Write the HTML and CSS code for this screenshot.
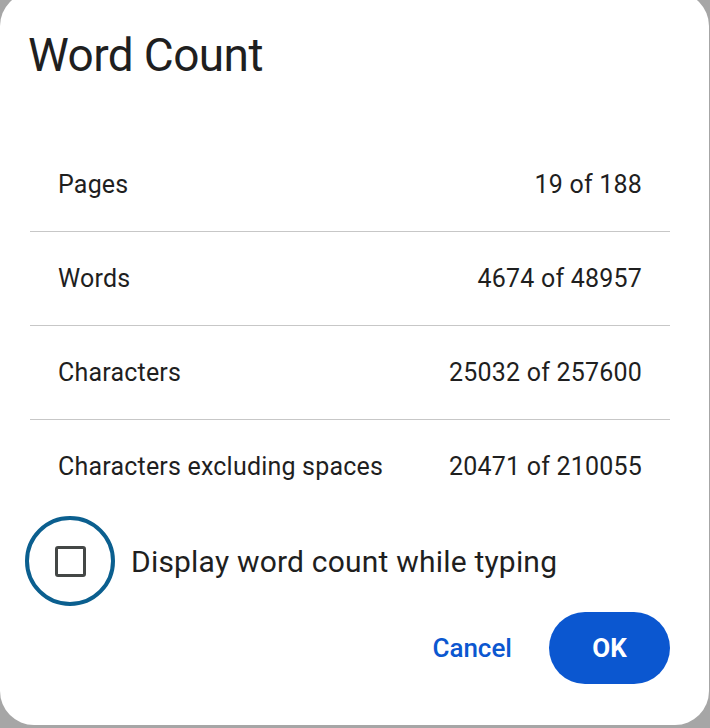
FILE: index.html
```html
<!DOCTYPE html>
<html lang="en">
<head>
<meta charset="UTF-8">
<meta name="viewport" content="width=device-width, initial-scale=1.0">
<title>Word Count</title>
<link rel="stylesheet" href="styles.css">
</head>
<body>

<div class="dialog">
    <h1 class="title">Word Count</h1>

    <div class="stats">
        <div class="stat-row">
            <span>Pages</span>
            <span>19 of 188</span>
        </div>
        <div class="stat-row">
            <span>Words</span>
            <span>4674 of 48957</span>
        </div>
        <div class="stat-row">
            <span>Characters</span>
            <span>25032 of 257600</span>
        </div>
        <div class="stat-row">
            <span>Characters excluding spaces</span>
            <span>20471 of 210055</span>
        </div>
    </div>

    <label class="check-row">
        <span class="focus-ring"><span class="box"></span></span>
        <span class="check-label">Display word count while typing</span>
    </label>

    <div class="actions">
        <button class="btn-text">Cancel</button>
        <button class="btn-ok">OK</button>
    </div>
</div>

</body>
</html>
```

FILE: styles.css
```css
body {
    margin: 0;
    background-color: #a6a6a6;
    font-family: Roboto, "Liberation Sans", sans-serif;
    color: #1f1f1f;
    overflow: hidden;
}
.dialog {
    box-sizing: border-box;
    width: 709px;
    height: 733px;
    margin-top: -8px;
    background-color: #fff;
    border-radius: 34px;
    padding-top: 8px;
}
.title {
    margin: 0;
    padding: 28px 0 0 28px;
    font-size: 46px;
    font-weight: 400;
    line-height: 54px;
    letter-spacing: -0.6px;
}
.stats {
    margin: 56px 39px 0 30px;
}
.stat-row {
    display: flex;
    justify-content: space-between;
    align-items: center;
    height: 93px;
    padding: 0 28px;
    font-size: 25px;
    letter-spacing: 0.2px;
    border-bottom: 1px solid #c7c7c7;
}
.stat-row:last-child {
    border-bottom: none;
}
.check-row {
    display: flex;
    align-items: center;
    margin-top: 3px;
    padding-left: 25px;
}
.focus-ring {
    box-sizing: border-box;
    width: 90px;
    height: 90px;
    border: 4px solid #0b5f8f;
    border-radius: 50%;
    display: flex;
    align-items: center;
    justify-content: center;
}
.box {
    box-sizing: border-box;
    width: 31px;
    height: 31px;
    border: 3px solid #444746;
    border-radius: 3px;
}
.check-label {
    margin-left: 16px;
    font-size: 30px;
    letter-spacing: 0.2px;
}
.actions {
    display: flex;
    justify-content: flex-end;
    align-items: center;
    gap: 37px;
    margin: 6px 39px 0 0;
}
.btn-text {
    background: none;
    border: none;
    padding: 0;
    font-family: inherit;
    font-size: 26px;
    font-weight: 500;
    color: #0b57d0;
    cursor: pointer;
}
.btn-ok {
    width: 121px;
    height: 72px;
    border: none;
    border-radius: 36px;
    background-color: #0b57d0;
    color: #fff;
    font-family: inherit;
    font-size: 26px;
    font-weight: 700;
    cursor: pointer;
}
```
